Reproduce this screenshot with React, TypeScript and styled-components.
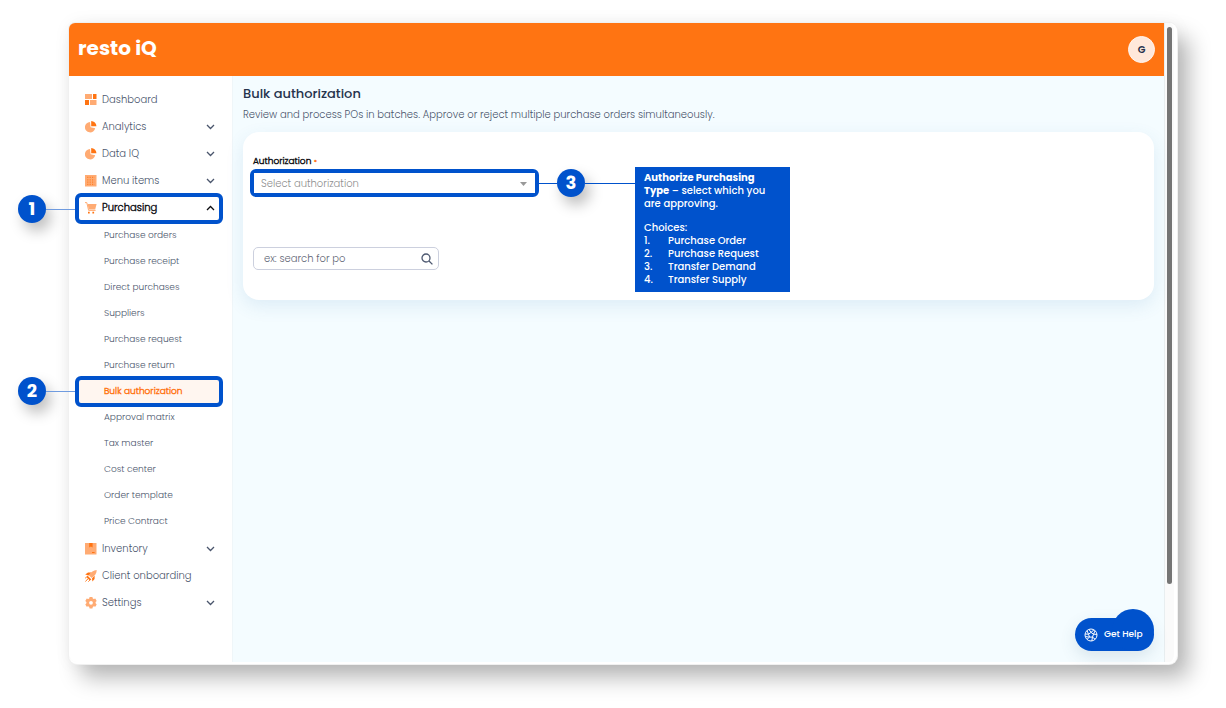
import React from "react";
import styled, { createGlobalStyle, css } from "styled-components";

const blue = "#0052cc";
const orange = "#ff7412";
const light = "#ffab73";

const Global = createGlobalStyle`
  * { box-sizing: border-box; }
  body { margin: 0; background: #fff; font-family: Poppins, Inter, "Open Sans", sans-serif; font-weight: 300; color: #4a556c; }
  button, input, select { font-family: inherit; font-weight: inherit; }
  h1, p, ul, ol { margin: 0; padding: 0; }
  ul, ol { list-style: none; }
`;

const Page = styled.div`
  min-height: 100vh;
  padding: 23px 49px 44px 69px;
  display: flex;
`;

const Frame = styled.div`
  flex: 1;
  display: flex;
  border-bottom: 2px solid #fff;
  border-radius: 6px 8px 8px 8px;
  background: #fafafa;
  box-shadow: 0 0 0 1px #f0f0f0, 12px 14px 22px rgba(0, 0, 0, 0.28), 0 0 18px rgba(0, 0, 0, 0.05);
`;

const Screen = styled.div`
  flex: 1;
  display: flex;
  flex-direction: column;
`;

const Gutter = styled.div`
  width: 13px;
  display: flex;
  padding: 4px 2px 78px;
  border-left: 1px solid #e8eef0;
  border-right: 3px solid #fff;
  border-radius: 0 8px 8px 0;
`;

const Thumb = styled.div`
  flex: 1;
  border-radius: 3px;
  background: #757575;
`;

const Header = styled.header`
  height: 53px;
  padding: 0 9px;
  display: flex;
  align-items: center;
  justify-content: space-between;
  background: ${orange};
  border-radius: 6px 0 0 0;
`;

const Brand = styled.a`
  padding-bottom: 3px;
  font-size: 20px;
  line-height: 24px;
  font-weight: 700;
  color: #fff;
  text-decoration: none;
`;

const Avatar = styled.button`
  width: 27px;
  height: 27px;
  padding: 0;
  border: 1px solid #fff5ee;
  border-radius: 50%;
  background: #ffe8db;
  color: #26334d;
  font-size: 10px;
  font-weight: 600;
`;

const Body = styled.div`
  flex: 1;
  display: flex;
`;

const Sidebar = styled.nav`
  width: 164px;
  padding: 10px 0;
  background: #fff;
  border-right: 1px solid #eff6f9;
  border-radius: 0 0 0 8px;
`;

const Item = styled.li`
  position: relative;
`;

const rowText = css`
  display: flex;
  align-items: center;
  width: 100%;
  border: 0;
  background: none;
  text-align: left;
  text-decoration: none;
`;

const strong = css`
  -webkit-text-stroke: 0.4px currentColor;
`;

const NavButton = styled.button<{ $open?: boolean }>`
  ${rowText}
  height: 27px;
  padding: 0 17px 0 16px;
  gap: 5px;
  font-size: 10px;
  color: ${(p) => (p.$open ? "#0c0c10" : "#4a556c")};
  ${(p) => p.$open && strong}
`;

const NavLabel = styled.span`
  flex: 1;
`;

const SubList = styled.ul`
  padding: 1px 0;
`;

const SubLink = styled.a<{ $active?: boolean }>`
  ${rowText}
  height: 26px;
  padding-left: 35px;
  font-size: 9px;
  color: ${(p) => (p.$active ? orange : "#4a556c")};
  background: ${(p) => (p.$active ? "linear-gradient(#fff6f0, #fff6f0) 8px 0 / 144px 100% no-repeat" : "none")};
  ${(p) => p.$active && strong}
`;

const Ring = styled.span<{ $nested?: boolean }>`
  position: absolute;
  top: ${(p) => (p.$nested ? -2 : -1)}px;
  left: 6px;
  right: 9px;
  height: 31px;
  border: 4px solid ${blue};
  border-radius: 6px;
  pointer-events: none;
`;

const Marker = styled.span`
  display: flex;
  align-items: center;
  justify-content: center;
  flex: none;
  width: 28px;
  height: 28px;
  border-radius: 50%;
  background: ${blue};
  color: #fff;
  font-size: 18px;
  line-height: 20px;
  font-weight: 700;
  box-shadow: 5px 8px 14px rgba(0, 0, 0, 0.25);
`;

const Wire = styled.span<{ $soft?: boolean; $long?: boolean }>`
  flex: ${(p) => (p.$long ? "0 0 50px" : "1")};
  height: 1px;
  background: ${(p) => (p.$soft ? "#6f9bdf" : blue)};
`;

const StepMark = styled.span<{ $nested?: boolean }>`
  position: absolute;
  left: -51px;
  top: ${(p) => (p.$nested ? -1 : 1)}px;
  width: 57px;
  display: flex;
  align-items: center;
`;

const Main = styled.main`
  flex: 1;
  position: relative;
  padding: 9px 10px 24px;
  background: #f4fcff;
`;

const Title = styled.h1`
  font-size: 13px;
  line-height: 18px;
  font-weight: 500;
  color: #26334d;
`;

const Intro = styled.p`
  margin-top: 4px;
  font-size: 10px;
  line-height: 16px;
`;

const Card = styled.section`
  position: relative;
  margin-top: 9px;
  height: 168px;
  padding: 23px 10px;
  border-radius: 16px;
  background: #fff;
  box-shadow: 0 6px 18px rgba(60, 120, 180, 0.12);
`;

const Label = styled.label`
  display: block;
  font-size: 9px;
  line-height: 12px;
  color: #0c0c10;
  ${strong}
`;

const Required = styled.span`
  color: ${orange};
`;

const Row = styled.div`
  display: flex;
  align-items: center;
  margin: 2px 0 0 -3px;
`;

const SelectBox = styled.div`
  position: relative;
  width: 289px;
  height: 28px;
  border: 4px solid ${blue};
  border-radius: 6px;
`;

const Select = styled.select`
  display: block;
  width: 100%;
  height: 20px;
  padding: 0 7px;
  border: 0;
  appearance: none;
  background: #fff;
  color: #8f8f8f;
  font-size: 10px;
`;

const Caret = styled.svg`
  position: absolute;
  right: 8px;
  top: 9px;
`;

const CalloutWire = styled.span`
  width: 96px;
  display: flex;
  align-items: center;
`;

const Callout = styled.aside`
  position: absolute;
  left: 392px;
  top: 35px;
  width: 155px;
  height: 125px;
  padding: 4px 9px;
  background: ${blue};
  color: #fff;
  font-size: 10px;
  line-height: 13px;
  font-weight: 500;
  b { font-weight: 700; }
`;

const Choices = styled.div`
  margin-top: 11px;
`;

const Choice = styled.li`
  display: flex;
`;

const Num = styled.span`
  width: 24px;
`;

const Search = styled.div`
  display: flex;
  align-items: center;
  width: 186px;
  height: 23px;
  margin-top: 50px;
  padding: 0 5px 0 10px;
  border: 1px solid #ccd0de;
  border-radius: 5px;
`;

const SearchInput = styled.input`
  flex: 1;
  min-width: 0;
  padding: 0;
  border: 0;
  outline: 0;
  font-size: 10px;
  &::placeholder { color: #5f6675; opacity: 1; }
`;

const Help = styled.button`
  position: absolute;
  right: 10px;
  bottom: 11px;
  width: 79px;
  height: 33px;
  padding: 0 0 0 9px;
  display: flex;
  align-items: center;
  gap: 6px;
  border: 0;
  border-radius: 17px;
  background: ${blue};
  color: #fff;
  font-size: 9px;
  font-weight: 500;
  white-space: nowrap;
  box-shadow: 0 6px 16px rgba(60, 100, 130, 0.15);
  &::before {
    content: "";
    position: absolute;
    right: 0;
    bottom: 0;
    width: 42px;
    height: 42px;
    border-radius: 50%;
    background: ${blue};
  }
`;

const HelpText = styled.span`
  position: relative;
`;

const Icon = ({ name }: { name: string }) => (
  <svg width="12" height="12" viewBox="0 0 12 12" aria-hidden="true">
    {name === "dash" && (
      <>
        <path fill={light} d="M0 0h7v5H0zM5 6h6.5v5H5z" />
        <path fill={orange} d="M8 0h3.5v5H8zM0 6h4v5H0z" />
      </>
    )}
    {name === "pie" && (
      <>
        <path fill={light} d="M5 1a5.200 5.200 0 1 0 5.200 6.200L5.600 6.200z" />
        <path fill={orange} d="M6.2 0a5.2 5.2 0 0 1 5.2 5.2H6.2z" />
      </>
    )}
    {name === "menu" && (
      <>
        <rect x="0" y="0" width="11.5" height="11.5" fill={light} />
        <path stroke={orange} strokeOpacity="0.75" strokeWidth="1.2" strokeDasharray="1.2 1.2" d="M2.2 2.4h7.4M2.2 4.8h7.4M2.2 7.2h7.4M2.2 9.4h7.4" />
      </>
    )}
    {name === "cart" && (
      <>
        <path fill={light} d="M2.6 2h9L10.2 7.6H3.8z" />
        <path fill="none" stroke={light} d="M0 0.6h1.8L3.6 8.4h7" />
        <path fill={orange} d="M3 9.8h1.7v1.7H3zM7.4 9.8h1.7v1.7H7.4z" />
      </>
    )}
    {name === "box" && (
      <>
        <rect x="0" y="0" width="11.5" height="11.5" fill={light} />
        <path fill={orange} d="M4.2 0h3.4v4.4L5.9 3.4 4.2 4.4zM7 9h2.6v1H7z" />
      </>
    )}
    {name === "rocket" && (
      <>
        <path fill={orange} d="M0.2 4.6L3 2.4h3.6L4 5.4zM7 8.4L9.6 5.4V9L7.4 11.6zM2.4 5.6l4 4-1.6.8-3.2-3.2z" />
        <path fill={light} d="M11.7 0c0 3-1.4 5.4-5 8L3.8 5.3C6 2 8.6 0.1 11.7 0z" />
        <path stroke={orange} d="M0.2 8.2L1.8 6.8M0.4 11.4l2.6-2.6M3.4 11.6l1.4-1.4" />
      </>
    )}
    {name === "gear" && (
      <path
        fill={light}
        fillRule="evenodd"
        d="M4.6 0h2.8l.4 1.5 1 .6 1.5-.5 1.4 2.4-1.1 1.1v1.2l1.1 1.1-1.4 2.4-1.5-.5-1 .6-.4 1.5H4.6l-.4-1.5-1-.6-1.5.5L.3 7.4l1.1-1.1V5.1L.3 4l1.4-2.4 1.5.5 1-.6zM6 3.9a1.9 1.9 0 1 0 0 3.8 1.9 1.9 0 0 0 0-3.8z"
      />
    )}
  </svg>
);

const Chevron = ({ up }: { up?: boolean }) => (
  <svg width="9" height="6" viewBox="0 0 9 6" fill="none" stroke="currentColor" strokeWidth="1.3" aria-hidden="true">
    <path d={up ? "M1 5l3.5-3.5L8 5" : "M1 1l3.5 3.5L8 1"} />
  </svg>
);

const purchasing = [
  "Purchase orders", "Purchase receipt", "Direct purchases", "Suppliers", "Purchase request", "Purchase return",
  "Bulk authorization", "Approval matrix", "Tax master", "Cost center", "Order template", "Price Contract",
];

const sections = [
  { label: "Dashboard", icon: "dash" },
  { label: "Analytics", icon: "pie", expands: true },
  { label: "Data IQ", icon: "pie", expands: true },
  { label: "Menu items", icon: "menu", expands: true },
  { label: "Purchasing", icon: "cart", expands: true, children: purchasing },
  { label: "Inventory", icon: "box", expands: true },
  { label: "Client onboarding", icon: "rocket" },
  { label: "Settings", icon: "gear", expands: true },
];

const Step = ({ n, nested }: { n: number; nested?: boolean }) => (
  <>
    <Ring $nested={nested} />
    <StepMark $nested={nested}>
      <Marker>{n}</Marker>
      <Wire $soft />
    </StepMark>
  </>
);

export default function App() {
  return (
    <>
      <Global />
      <Page>
        <Frame>
          <Screen>
            <Header>
              <Brand href="#">resto iQ</Brand>
              <Avatar>G</Avatar>
            </Header>
            <Body>
              <Sidebar>
                <ul>
                  {sections.map((s) => (
                    <li key={s.label}>
                      <Item as="div">
                        <NavButton $open={!!s.children}>
                          <Icon name={s.icon} />
                          <NavLabel>{s.label}</NavLabel>
                          {s.expands && <Chevron up={!!s.children} />}
                        </NavButton>
                        {s.children && <Step n={1} />}
                      </Item>
                      {s.children && (
                        <SubList>
                          {s.children.map((c) => (
                            <Item key={c}>
                              <SubLink href="#" $active={c === "Bulk authorization"}>{c}</SubLink>
                              {c === "Bulk authorization" && <Step n={2} nested />}
                            </Item>
                          ))}
                        </SubList>
                      )}
                    </li>
                  ))}
                </ul>
              </Sidebar>
              <Main>
                <Title>Bulk authorization</Title>
                <Intro>Review and process POs in batches. Approve or reject multiple purchase orders simultaneously.</Intro>
                <Card>
                  <Label htmlFor="auth">Authorization <Required>•</Required></Label>
                  <Row>
                    <SelectBox>
                      <Select id="auth" defaultValue="">
                        <option value="">Select authorization</option>
                        <option>Purchase Order</option>
                        <option>Purchase Request</option>
                        <option>Transfer Demand</option>
                        <option>Transfer Supply</option>
                      </Select>
                      <Caret width="7" height="4" viewBox="0 0 7 4" aria-hidden="true">
                        <path fill="#999" d="M0 0h7L3.5 4z" />
                      </Caret>
                    </SelectBox>
                    <CalloutWire>
                      <Wire />
                      <Marker>3</Marker>
                      <Wire $long />
                    </CalloutWire>
                  </Row>
                  <Search>
                    <SearchInput type="search" aria-label="Search" placeholder="ex: search for po" />
                    <svg width="12" height="12" viewBox="0 0 12 12" fill="none" stroke="#4d5870" strokeWidth="1.3" aria-hidden="true">
                      <circle cx="5" cy="5" r="4" />
                      <path d="M8 8l3.4 3.4" />
                    </svg>
                  </Search>
                  <Callout>
                    <p><b>Authorize Purchasing Type</b> – select which you are approving.</p>
                    <Choices>
                      <p>Choices:</p>
                      <ol>
                        {["Purchase Order", "Purchase Request", "Transfer Demand", "Transfer Supply"].map((c, i) => (
                          <Choice key={c}><Num>{i + 1}.</Num>{c}</Choice>
                        ))}
                      </ol>
                    </Choices>
                  </Callout>
                </Card>
                <Help>
                  <svg width="14" height="14" viewBox="0 0 14 14" fill="none" stroke="#fff" aria-hidden="true">
                    <circle cx="7" cy="7" r="6" />
                    <path d="M7 4.4l2.5 1.8-1 2.9h-3l-1-2.9zM7 4.4L5 1.4M7 4.4l3-2.6M9.5 6.2l3.4.2M9.5 6.2l1.6-3.4M8.5 9.1l2.7 2.2M8.5 9.1l-.7 3.7M5.5 9.1L3 11.4M5.5 9.1L1.6 8.6M4.5 6.2L1.2 6M4.5 6.2L3 2.6" />
                  </svg>
                  <HelpText>Get Help</HelpText>
                </Help>
              </Main>
            </Body>
          </Screen>
          <Gutter><Thumb /></Gutter>
        </Frame>
      </Page>
    </>
  );
}
